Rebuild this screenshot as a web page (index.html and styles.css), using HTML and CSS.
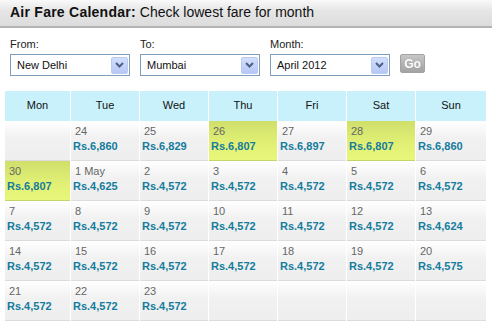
FILE: index.html
```html
<!DOCTYPE html>
<html>

<head>
    <meta charset="utf-8">
    <title>Air Fare Calendar</title>
    <link rel="stylesheet" href="styles.css">
</head>

<body>
    <div class="titlebar">
        <b>Air Fare Calendar:</b> Check lowest fare for month
    </div>

    <div class="search">
        <div class="field">
            <label>From:</label>
            <div class="select">
                <span>New Delhi</span>
                <i class="arrow"><svg width="9" height="6" viewBox="0 0 9 6"><path d="M1 1 L4.5 4.5 L8 1" fill="none" stroke="#4d6185" stroke-width="2"/></svg></i>
            </div>
        </div>
        <div class="field">
            <label>To:</label>
            <div class="select">
                <span>Mumbai</span>
                <i class="arrow"><svg width="9" height="6" viewBox="0 0 9 6"><path d="M1 1 L4.5 4.5 L8 1" fill="none" stroke="#4d6185" stroke-width="2"/></svg></i>
            </div>
        </div>
        <div class="field">
            <label>Month:</label>
            <div class="select">
                <span>April 2012</span>
                <i class="arrow"><svg width="9" height="6" viewBox="0 0 9 6"><path d="M1 1 L4.5 4.5 L8 1" fill="none" stroke="#4d6185" stroke-width="2"/></svg></i>
            </div>
        </div>
        <button class="go-btn">Go</button>
    </div>

    <div class="calendar">
        <div class="dayname">Mon</div>
        <div class="dayname">Tue</div>
        <div class="dayname">Wed</div>
        <div class="dayname">Thu</div>
        <div class="dayname">Fri</div>
        <div class="dayname">Sat</div>
        <div class="dayname">Sun</div>

        <div class="day"></div>
        <div class="day"><div class="num">24</div><div class="fare">Rs.6,860</div></div>
        <div class="day"><div class="num">25</div><div class="fare">Rs.6,829</div></div>
        <div class="day low"><div class="num">26</div><div class="fare">Rs.6,807</div></div>
        <div class="day"><div class="num">27</div><div class="fare">Rs.6,897</div></div>
        <div class="day low"><div class="num">28</div><div class="fare">Rs.6,807</div></div>
        <div class="day"><div class="num">29</div><div class="fare">Rs.6,860</div></div>

        <div class="day low"><div class="num">30</div><div class="fare">Rs.6,807</div></div>
        <div class="day"><div class="num">1 May</div><div class="fare">Rs.4,625</div></div>
        <div class="day"><div class="num">2</div><div class="fare">Rs.4,572</div></div>
        <div class="day"><div class="num">3</div><div class="fare">Rs.4,572</div></div>
        <div class="day"><div class="num">4</div><div class="fare">Rs.4,572</div></div>
        <div class="day"><div class="num">5</div><div class="fare">Rs.4,572</div></div>
        <div class="day"><div class="num">6</div><div class="fare">Rs.4,572</div></div>

        <div class="day"><div class="num">7</div><div class="fare">Rs.4,572</div></div>
        <div class="day"><div class="num">8</div><div class="fare">Rs.4,572</div></div>
        <div class="day"><div class="num">9</div><div class="fare">Rs.4,572</div></div>
        <div class="day"><div class="num">10</div><div class="fare">Rs.4,572</div></div>
        <div class="day"><div class="num">11</div><div class="fare">Rs.4,572</div></div>
        <div class="day"><div class="num">12</div><div class="fare">Rs.4,572</div></div>
        <div class="day"><div class="num">13</div><div class="fare">Rs.4,624</div></div>

        <div class="day"><div class="num">14</div><div class="fare">Rs.4,572</div></div>
        <div class="day"><div class="num">15</div><div class="fare">Rs.4,572</div></div>
        <div class="day"><div class="num">16</div><div class="fare">Rs.4,572</div></div>
        <div class="day"><div class="num">17</div><div class="fare">Rs.4,572</div></div>
        <div class="day"><div class="num">18</div><div class="fare">Rs.4,572</div></div>
        <div class="day"><div class="num">19</div><div class="fare">Rs.4,572</div></div>
        <div class="day"><div class="num">20</div><div class="fare">Rs.4,575</div></div>

        <div class="day"><div class="num">21</div><div class="fare">Rs.4,572</div></div>
        <div class="day"><div class="num">22</div><div class="fare">Rs.4,572</div></div>
        <div class="day"><div class="num">23</div><div class="fare">Rs.4,572</div></div>
        <div class="day"></div>
        <div class="day"></div>
        <div class="day"></div>
        <div class="day"></div>
    </div>
</body>

</html>
```

FILE: styles.css
```css
body {
    font-family: "Liberation Sans", Arial, sans-serif;
    font-size: 11px;
    background-color: white;
    color: #000;
    margin: 0;
}

.titlebar {
    width: 482px;
    height: 26px;
    line-height: 25px;
    padding-left: 10px;
    font-size: 14px;
    color: #111;
    background: linear-gradient(#f9f9f9, #e6e6e6 40%, #dcdcdc);
    border-bottom: 2px solid #b4b4b4;
    box-sizing: content-box;
}

.titlebar b {
    letter-spacing: 0.25px;
}

.search {
    display: flex;
    align-items: flex-end;
    gap: 10px;
    padding: 10px 0 15px 10px;
}

.field label {
    display: block;
    line-height: 13px;
    margin-bottom: 3px;
    color: #222;
}

.select {
    width: 120px;
    height: 22px;
    box-sizing: border-box;
    border: 1px solid #7f9db9;
    display: flex;
    align-items: center;
    justify-content: space-between;
    padding: 0 1px 0 6px;
    line-height: 20px;
    color: #111;
}

.arrow {
    width: 17px;
    height: 17px;
    box-sizing: border-box;
    border: 1px solid #b9cbf3;
    border-radius: 2px;
    background: linear-gradient(#d3defc, #b6c8f6);
    display: flex;
    align-items: center;
    justify-content: center;
}

.go-btn {
    width: 25px;
    height: 19px;
    margin-bottom: 3px;
    padding: 0;
    border: 1px solid #a2a2a2;
    border-radius: 2px;
    background: linear-gradient(#c6c6c6, #a3a3a3);
    color: white;
    font-family: "Liberation Sans", Arial, sans-serif;
    font-size: 12px;
    font-weight: bold;
    text-shadow: 0 0 1px #888;
}

.calendar {
    display: grid;
    grid-template-columns: 65px repeat(5, 68px) 70px;
    column-gap: 1px;
    margin-left: 5px;
    width: 481px;
}

.dayname {
    height: 30px;
    line-height: 28px;
    text-align: center;
    background-color: #c9f1fb;
    color: #111;
}

.day {
    height: 39px;
    border-bottom: 1px solid #dcdcdc;
    background: linear-gradient(#ffffff, #f1f1f1 45%, #eeeeee);
}

.day.low {
    background: linear-gradient(#cfdf6b, #e2f175 60%, #e8f77a);
    border-bottom-color: #c4d46a;
}

.num {
    padding: 4px 0 0 4px;
    line-height: 13px;
    color: #666;
}

.fare {
    margin-top: 2px;
    padding-left: 2px;
    line-height: 13px;
    font-weight: bold;
    color: #157c9d;
}
```
